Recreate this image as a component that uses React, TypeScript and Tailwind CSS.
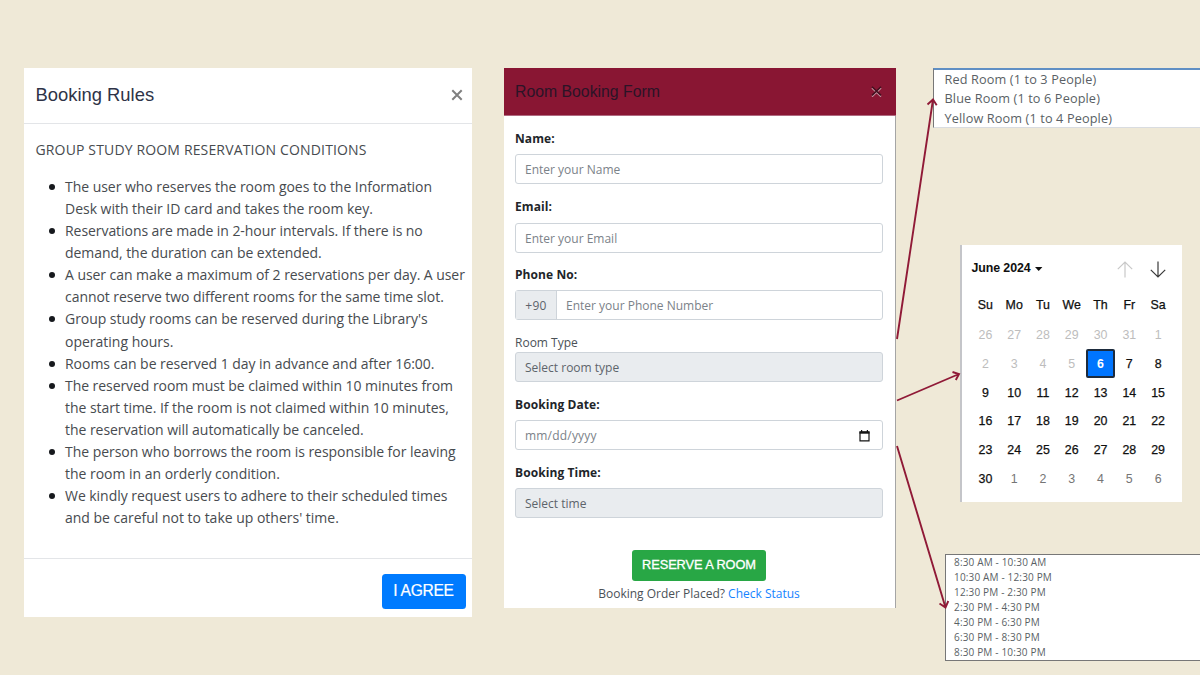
import React from "react";

const rules: { text: string; track: string }[][] = [
  [
    { text: "The user who reserves the room goes to the Information", track: "tracking-[-0.035px]" },
    { text: "Desk with their ID card and takes the room key.", track: "tracking-[-0.02px]" },
  ],
  [
    { text: "Reservations are made in 2-hour intervals. If there is no", track: "tracking-[-0.06px]" },
    { text: "demand, the duration can be extended.", track: "tracking-[-0.05px]" },
  ],
  [
    { text: "A user can make a maximum of 2 reservations per day. A user", track: "tracking-[-0.055px]" },
    { text: "cannot reserve two different rooms for the same time slot.", track: "tracking-[-0.05px]" },
  ],
  [
    { text: "Group study rooms can be reserved during the Library's", track: "tracking-[-0.04px]" },
    { text: "operating hours.", track: "tracking-[0px]" },
  ],
  [{ text: "Rooms can be reserved 1 day in advance and after 16:00.", track: "tracking-[-0.035px]" }],
  [
    { text: "The reserved room must be claimed within 10 minutes from", track: "tracking-[-0.06px]" },
    { text: "the start time. If the room is not claimed within 10 minutes,", track: "tracking-[-0.04px]" },
    { text: "the reservation will automatically be canceled.", track: "tracking-[-0.04px]" },
  ],
  [
    { text: "The person who borrows the room is responsible for leaving", track: "tracking-[-0.04px]" },
    { text: "the room in an orderly condition.", track: "tracking-[-0.02px]" },
  ],
  [
    { text: "We kindly request users to adhere to their scheduled times", track: "tracking-[-0.04px]" },
    { text: "and be careful not to take up others' time.", track: "tracking-[-0.01px]" },
  ],
];

const times = [
  "8:30 AM - 10:30 AM",
  "10:30 AM - 12:30 PM",
  "12:30 PM - 2:30 PM",
  "2:30 PM - 4:30 PM",
  "4:30 PM - 6:30 PM",
  "6:30 PM - 8:30 PM",
  "8:30 PM - 10:30 PM",
];

const days = [26, 27, 28, 29, 30, 31, ...Array.from({ length: 30 }, (_, i) => i + 1), 1, 2, 3, 4, 5, 6];

function dayClass(i: number) {
  if (i === 11) return "bg-[#0075ff] border-2 border-[#1d2b3d] rounded-[2px] pt-0.5 text-white font-bold";
  if (i < 11) return "text-[#bdbdbd] pt-0.5";
  if (i > 35) return "text-[#757575] pt-0.5";
  return "text-[#101010] pt-0.5 [-webkit-text-stroke:0.25px_#101010]";
}

function RulesPanel() {
  return (
    <section className="mt-[68px] ml-6 flex h-[549px] w-[448px] shrink-0 flex-col bg-white">
      <header className="flex h-14 shrink-0 items-center justify-between border-b border-[#e3e5e8] pr-[9px] pl-[11.5px]">
        <h2 className="pb-0.5 font-['Liberation_Sans',sans-serif] text-[18.4px] text-[#2e3347]">Booking Rules</h2>
        <svg width="12" height="12" viewBox="0 0 12 12" className="mb-px" fill="none" stroke="#7f7f7f" strokeWidth="2">
          <path d="M1.3 1.3 10.7 10.7M10.7 1.3 1.3 10.7" />
        </svg>
      </header>
      <div className="h-[434px] shrink-0 pl-[11.5px] text-[14px] leading-[22.07px] whitespace-nowrap text-[#474b4f]">
        <p className="pt-[15px] tracking-[0.15px]">GROUP STUDY ROOM RESERVATION CONDITIONS</p>
        <ul className="mt-[15px]">
          {rules.map((lines, i) => (
            <li key={i} className="flex">
              <span className="mt-[8px] mr-[10.5px] ml-[13px] size-[6px] shrink-0 rounded-full bg-[#16191d]" />
              <div>
                {lines.map((l) => (
                  <div key={l.text} className={l.track}>{l.text}</div>
                ))}
              </div>
            </li>
          ))}
        </ul>
      </div>
      <footer className="flex flex-1 justify-end border-t border-[#e3e5e8] pt-[15px] pr-[6.5px]">
        <button className="h-[35px] w-[84px] rounded-[3.5px] bg-[#007bff] pb-0.5 font-['Liberation_Sans',sans-serif] text-[15.6px] tracking-[-0.3px] text-white [-webkit-text-stroke:0.2px_white]">
          I AGREE
        </button>
      </footer>
    </section>
  );
}

const boldLabel = "flex h-[30px] items-center font-bold text-[#212529] tracking-[0.08px]";
const field = "flex h-[30px] items-center rounded-[3px] border border-[#ced4da] pt-0.5 pl-[9px] text-[#7b8289]";
const disabledField = "flex h-[30px] items-center rounded-[3px] border border-[#ced4da] bg-[#e9ecef] pt-0.5 pl-[9px] text-[#5d646b]";

function BookingForm() {
  return (
    <section className="mt-[68px] ml-8 flex h-[540px] w-[392px] shrink-0 flex-col bg-white">
      <header className="flex h-12 shrink-0 items-center justify-between border-b border-[#b06a80] bg-[#891633] pr-[14px] pl-[11px]">
        <h2 className="font-['Liberation_Sans',sans-serif] text-[15.8px] text-[#2b1427]">Room Booking Form</h2>
        <svg width="11" height="11" viewBox="0 0 11 11" className="mb-px" fill="none">
          <path d="M1 2 10 10.5M10 2 1 10.5" stroke="#c99aa7" strokeWidth="1.7" />
          <path d="M1 .8 10 9.4M10 .8 1 9.4" stroke="#43101f" strokeWidth="1.5" />
        </svg>
      </header>
      <div className="flex flex-1 flex-col border-r border-[#a5a5a5] pt-2 pr-3 pl-[11px] text-[12px] whitespace-nowrap">
        <label className={boldLabel}>Name:</label>
        <div className={field}>Enter your Name</div>
        <label className={`mt-2 ${boldLabel}`}>Email:</label>
        <div className={`mt-px ${field}`}>Enter your Email</div>
        <label className={`mt-[7px] ${boldLabel}`}>Phone No:</label>
        <div className="flex h-[30px] rounded-[3px] border border-[#ced4da]">
          <span className="flex w-[41px] items-center justify-center border-r border-[#ced4da] bg-[#e9ecef] pt-0.5 tracking-[0.3px] text-[#5d646b]">+90</span>
          <span className="flex items-center pt-0.5 pl-[9px] text-[#7b8289]">Enter your Phone Number</span>
        </div>
        <label className="mt-[14px] flex h-[18px] items-center text-[#4b5157]">Room Type</label>
        <div className={disabledField}>Select room type</div>
        <label className={`mt-2 ${boldLabel}`}>Booking Date:</label>
        <div className={`justify-between pr-3 ${field}`}>
          <span className="tracking-[0.2px]">mm/dd/yyyy</span>
          <svg width="11" height="12" viewBox="0 0 11 12" fill="none" stroke="#151515" className="mb-px">
            <path d="M1 1.8h9v9H1z" strokeWidth="1.2" />
            <path d="M.5 2.7h10" strokeWidth="2" />
            <path d="M2.6 0v2M8.4 0v2" strokeWidth="1.2" />
          </svg>
        </div>
        <label className={`mt-2 ${boldLabel}`}>Booking Time:</label>
        <div className={disabledField}>Select time</div>
        <div className="mt-8 flex flex-col items-center">
          <button className="h-[31px] w-[134px] rounded-[3px] bg-[#28a745] pb-px font-['Liberation_Sans',sans-serif] text-[12.8px] tracking-[-0.08px] text-white [-webkit-text-stroke:0.3px_white]">
            RESERVE A ROOM
          </button>
          <p className="mt-[4px] leading-[18px] text-[#4b5157]">
            Booking Order Placed? <a className="text-[#1684ff]">Check Status</a>
          </p>
        </div>
      </div>
    </section>
  );
}

function RoomOptions() {
  return (
    <ul className="ml-[37px] h-[60px] shrink-0 border-t-2 border-b border-l border-t-[#5f8fc4] border-b-[#d9dce0] border-l-[#777] bg-white pt-[0.2px] pl-[10.5px] text-[12.7px] leading-[19.3px] tracking-[0.13px] whitespace-nowrap text-[#5a5f65]">
      <li>Red Room (1 to 3 People)</li>
      <li>Blue Room (1 to 6 People)</li>
      <li>Yellow Room (1 to 4 People)</li>
    </ul>
  );
}

function Calendar() {
  return (
    <div className="mt-[117px] ml-16 h-[257px] w-[222px] shrink-0 border-l-2 border-[#c4c5c9] bg-white pr-[9.5px] pl-[9px] font-['Liberation_Sans',sans-serif]">
      <div className="flex h-[45px] items-center">
        <span className="pt-0.5 pl-[0.5px] text-[12.4px] font-bold tracking-[-0.1px] text-[#101010]">June 2024</span>
        <svg width="8" height="4" viewBox="0 0 8 4" className="mt-0.5 ml-1"><path d="M0 0h7.4L3.7 4z" fill="#101010" /></svg>
        <div className="mt-[3px] ml-auto flex gap-[17px] pr-[6.5px]">
          <svg width="16" height="17" viewBox="0 0 16 17" fill="none" stroke="#c8c8c8" strokeWidth="1.2">
            <path d="M8 16.5V1M.8 8.2 8 1l7.2 7.2" />
          </svg>
          <svg width="16" height="17" viewBox="0 0 16 17" fill="none" stroke="#3a3a3a" strokeWidth="1.2">
            <path d="M8 .5V16M.8 8.8 8 16l7.2-7.2" />
          </svg>
        </div>
      </div>
      <div className="grid grid-cols-7 text-center text-[12.4px] text-[#101010]">
        {["Su", "Mo", "Tu", "We", "Th", "Fr", "Sa"].map((d) => (
          <span key={d} className="flex h-[30px] items-center justify-center [-webkit-text-stroke:0.25px_#101010]">{d}</span>
        ))}
        {days.map((d, i) => (
          <span key={i} className={`flex h-[28.8px] items-center justify-center ${dayClass(i)}`}>{d}</span>
        ))}
      </div>
    </div>
  );
}

function TimeOptions() {
  return (
    <ul className="mt-[52px] ml-[49px] h-[107px] shrink-0 border-y border-l border-[#777] bg-white pl-2 text-[10px] leading-[15.08px] tracking-[0.16px] whitespace-nowrap text-[#5a5f65]">
      {times.map((t) => (
        <li key={t}>{t}</li>
      ))}
    </ul>
  );
}

export default function App() {
  return (
    <main className="relative flex h-[675px] w-[1200px] overflow-hidden bg-[#efe9d7] font-['Open_Sans','Noto_Sans',sans-serif]">
      <RulesPanel />
      <BookingForm />
      <aside className="flex flex-1 flex-col pt-[68px]">
        <RoomOptions />
        <Calendar />
        <TimeOptions />
      </aside>
      <svg className="pointer-events-none absolute inset-0" width="1200" height="675" viewBox="0 0 1200 675" fill="none" stroke="#901a37" strokeWidth="1.9">
        <path d="M897 339 933 99.5M927.5 104.5 933 99.5l3.7 5.8" />
        <path d="M897 400.5 959 374M952.5 372 959 374l-3.2 6" />
        <path d="M897 446 945.5 607.5M939.5 603.5 945.5 607.5l2.8-6.5" />
      </svg>
    </main>
  );
}
